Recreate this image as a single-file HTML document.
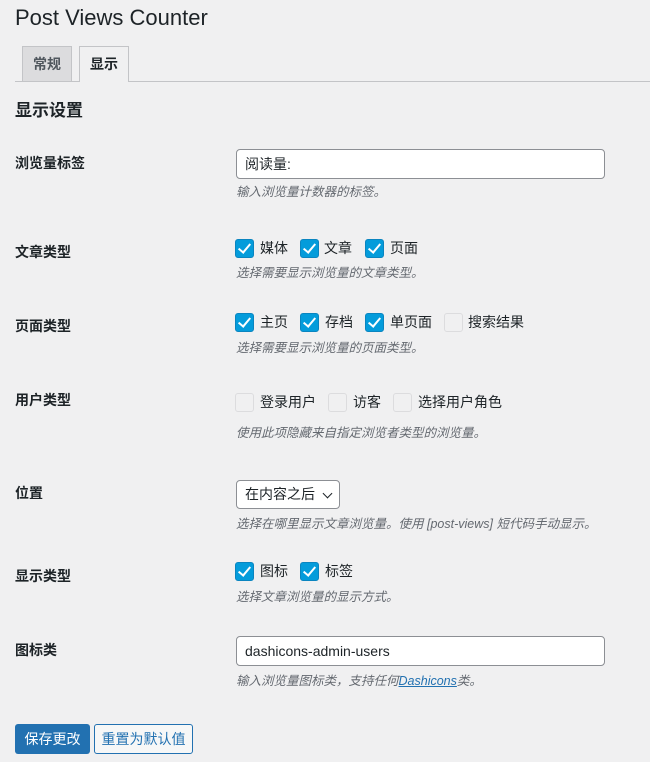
<!DOCTYPE html>
<html><head><meta charset="utf-8"><style>
*{box-sizing:border-box;margin:0;padding:0}
body{width:650px;height:762px;background:#f0f0f1;font-family:"Liberation Sans","Noto Sans CJK SC",sans-serif;color:#1d2327;font-size:14px;position:relative;overflow:hidden}
.a{position:absolute;white-space:nowrap}
.lbl{font-weight:bold;font-size:14px;left:15px}
.d{font-style:italic;color:#646970;font-size:12.5px;left:236px}
.cb{position:absolute;width:19px;height:19px;border:1px solid #8c8f94;border-radius:3px;background:#2271b1}
.cb.on{background:#049cdb;border-color:#0a85c0}
.cb.on::after{content:"";position:absolute;left:5px;top:1px;width:5px;height:10px;border:solid #fff;border-width:0 2.5px 2.5px 0;transform:rotate(40deg)}
.cb.off{background:#f0f0f1;border-color:#dcdcde}
.inp{position:absolute;background:#fff;border:1px solid #8c8f94;border-radius:4px;padding:0 8px;font-size:14px}
</style></head><body>
<div class="a" style="left:15px;top:5px;font-size:22px;color:#1d2327">Post Views Counter</div>
<div class="a" style="left:15px;top:81px;width:635px;height:1px;background:#c3c4c7"></div>
<div class="a" style="left:22px;top:46px;width:50px;height:35px;background:#dcdcde;border:1px solid #c3c4c7;border-bottom:none;font-weight:bold;text-align:center;line-height:34px;color:#50575e">常规</div>
<div class="a" style="left:79px;top:46px;width:50px;height:36px;background:#f0f0f1;border:1px solid #c3c4c7;border-bottom:none;font-weight:bold;text-align:center;line-height:34px">显示</div>
<div class="a" style="left:15px;top:96px;font-size:17px;font-weight:bold">显示设置</div>

<div class="a lbl" style="top:153px">浏览量标签</div>
<div class="inp" style="left:236px;top:149px;width:369px;height:30px;line-height:28px">阅读量:</div>
<div class="a d" style="top:181px">输入浏览量计数器的标签。</div>

<div class="a lbl" style="top:242px">文章类型</div>
<div class="cb on" style="left:235px;top:239px"></div><div class="a" style="left:260px;top:238px">媒体</div>
<div class="cb on" style="left:300px;top:239px"></div><div class="a" style="left:324px;top:238px">文章</div>
<div class="cb on" style="left:365px;top:239px"></div><div class="a" style="left:390px;top:238px">页面</div>
<div class="a d" style="top:262px">选择需要显示浏览量的文章类型。</div>

<div class="a lbl" style="top:316px">页面类型</div>
<div class="cb on" style="left:235px;top:313px"></div><div class="a" style="left:260px;top:312px">主页</div>
<div class="cb on" style="left:300px;top:313px"></div><div class="a" style="left:325px;top:312px">存档</div>
<div class="cb on" style="left:365px;top:313px"></div><div class="a" style="left:390px;top:312px">单页面</div>
<div class="cb off" style="left:444px;top:313px"></div><div class="a" style="left:468px;top:312px">搜索结果</div>
<div class="a d" style="top:337px">选择需要显示浏览量的页面类型。</div>

<div class="a lbl" style="top:390px">用户类型</div>
<div class="cb off" style="left:235px;top:393px"></div><div class="a" style="left:260px;top:392px">登录用户</div>
<div class="cb off" style="left:328px;top:393px"></div><div class="a" style="left:353px;top:392px">访客</div>
<div class="cb off" style="left:393px;top:393px"></div><div class="a" style="left:418px;top:392px">选择用户角色</div>
<div class="a d" style="top:422px">使用此项隐藏来自指定浏览者类型的浏览量。</div>

<div class="a lbl" style="top:483px">位置</div>
<div class="inp" style="left:236px;top:480px;width:104px;height:29px;line-height:27px;font-size:14px;padding-left:8px">在内容之后 <span style="position:absolute;right:8px;top:9px;width:7px;height:7px;border:solid #1d2327;border-width:0 1.5px 1.5px 0;transform:rotate(45deg)"></span></div>
<div class="a d" style="top:513px">选择在哪里显示文章浏览量。使用 [post-views] 短代码手动显示。</div>

<div class="a lbl" style="top:566px">显示类型</div>
<div class="cb on" style="left:235px;top:562px"></div><div class="a" style="left:260px;top:561px">图标</div>
<div class="cb on" style="left:300px;top:562px"></div><div class="a" style="left:325px;top:561px">标签</div>
<div class="a d" style="top:586px">选择文章浏览量的显示方式。</div>

<div class="a lbl" style="top:640px">图标类</div>
<div class="inp" style="left:236px;top:636px;width:369px;height:30px;line-height:28px">dashicons-admin-users</div>
<div class="a d" style="top:670px">输入浏览量图标类，支持任何<span style="color:#2271b1;text-decoration:underline">Dashicons</span>类。</div>

<div class="a" style="left:15px;top:724px;width:75px;height:30px;background:#2271b1;border-radius:3px;color:#fff;text-align:center;line-height:30px">保存更改</div>
<div class="a" style="left:94px;top:724px;width:99px;height:30px;background:#f6f7f7;border:1px solid #2271b1;border-radius:3px;color:#2271b1;text-align:center;line-height:28px">重置为默认值</div>
</body></html>
